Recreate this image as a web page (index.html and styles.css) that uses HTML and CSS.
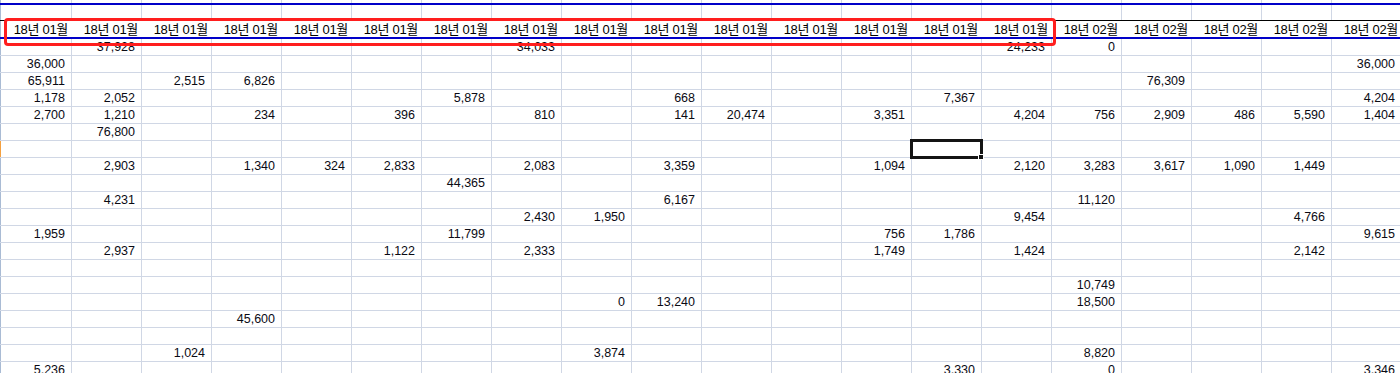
FILE: index.html
```html
<!DOCTYPE html>
<html lang="ko">
<head>
<meta charset="utf-8">
<title>Sheet</title>
<link rel="stylesheet" href="styles.css">
</head>
<body>
<div class="sheet">
  <div class="row top"><i class="g"></i><span class="c"></span><span class="c"></span><span class="c"></span><span class="c"></span><span class="c"></span><span class="c"></span><span class="c"></span><span class="c"></span><span class="c"></span><span class="c"></span><span class="c"></span><span class="c"></span><span class="c"></span><span class="c"></span><span class="c"></span><span class="c"></span><span class="c"></span><span class="c"></span><span class="c"></span><span class="c"></span></div>
  <div class="row blank"><i class="g"></i><span class="c"></span><span class="c"></span><span class="c"></span><span class="c"></span><span class="c"></span><span class="c"></span><span class="c"></span><span class="c"></span><span class="c"></span><span class="c"></span><span class="c"></span><span class="c"></span><span class="c"></span><span class="c"></span><span class="c"></span><span class="c"></span><span class="c"></span><span class="c"></span><span class="c"></span><span class="c"></span></div>
  <div class="row head"><i class="g"></i><span class="c">18년 01월</span><span class="c">18년 01월</span><span class="c">18년 01월</span><span class="c">18년 01월</span><span class="c">18년 01월</span><span class="c">18년 01월</span><span class="c">18년 01월</span><span class="c">18년 01월</span><span class="c">18년 01월</span><span class="c">18년 01월</span><span class="c">18년 01월</span><span class="c">18년 01월</span><span class="c">18년 01월</span><span class="c">18년 01월</span><span class="c">18년 01월</span><span class="c">18년 02월</span><span class="c">18년 02월</span><span class="c">18년 02월</span><span class="c">18년 02월</span><span class="c">18년 02월</span></div>
  <div class="row"><i class="g"></i><span class="c"></span><span class="c">37,928</span><span class="c"></span><span class="c"></span><span class="c"></span><span class="c"></span><span class="c"></span><span class="c">34,033</span><span class="c"></span><span class="c"></span><span class="c"></span><span class="c"></span><span class="c"></span><span class="c"></span><span class="c">24,233</span><span class="c">0</span><span class="c"></span><span class="c"></span><span class="c"></span><span class="c"></span></div>
  <div class="row"><i class="g"></i><span class="c">36,000</span><span class="c"></span><span class="c"></span><span class="c"></span><span class="c"></span><span class="c"></span><span class="c"></span><span class="c"></span><span class="c"></span><span class="c"></span><span class="c"></span><span class="c"></span><span class="c"></span><span class="c"></span><span class="c"></span><span class="c"></span><span class="c"></span><span class="c"></span><span class="c"></span><span class="c">36,000</span></div>
  <div class="row"><i class="g"></i><span class="c">65,911</span><span class="c"></span><span class="c">2,515</span><span class="c">6,826</span><span class="c"></span><span class="c"></span><span class="c"></span><span class="c"></span><span class="c"></span><span class="c"></span><span class="c"></span><span class="c"></span><span class="c"></span><span class="c"></span><span class="c"></span><span class="c"></span><span class="c">76,309</span><span class="c"></span><span class="c"></span><span class="c"></span></div>
  <div class="row"><i class="g"></i><span class="c">1,178</span><span class="c">2,052</span><span class="c"></span><span class="c"></span><span class="c"></span><span class="c"></span><span class="c">5,878</span><span class="c"></span><span class="c"></span><span class="c">668</span><span class="c"></span><span class="c"></span><span class="c"></span><span class="c">7,367</span><span class="c"></span><span class="c"></span><span class="c"></span><span class="c"></span><span class="c"></span><span class="c">4,204</span></div>
  <div class="row"><i class="g"></i><span class="c">2,700</span><span class="c">1,210</span><span class="c"></span><span class="c">234</span><span class="c"></span><span class="c">396</span><span class="c"></span><span class="c">810</span><span class="c"></span><span class="c">141</span><span class="c">20,474</span><span class="c"></span><span class="c">3,351</span><span class="c"></span><span class="c">4,204</span><span class="c">756</span><span class="c">2,909</span><span class="c">486</span><span class="c">5,590</span><span class="c">1,404</span></div>
  <div class="row"><i class="g"></i><span class="c"></span><span class="c">76,800</span><span class="c"></span><span class="c"></span><span class="c"></span><span class="c"></span><span class="c"></span><span class="c"></span><span class="c"></span><span class="c"></span><span class="c"></span><span class="c"></span><span class="c"></span><span class="c"></span><span class="c"></span><span class="c"></span><span class="c"></span><span class="c"></span><span class="c"></span><span class="c"></span></div>
  <div class="row cur"><i class="g"></i><span class="c"></span><span class="c"></span><span class="c"></span><span class="c"></span><span class="c"></span><span class="c"></span><span class="c"></span><span class="c"></span><span class="c"></span><span class="c"></span><span class="c"></span><span class="c"></span><span class="c"></span><span class="c active"><span class="sel"><span class="handle"></span></span></span><span class="c"></span><span class="c"></span><span class="c"></span><span class="c"></span><span class="c"></span><span class="c"></span></div>
  <div class="row"><i class="g"></i><span class="c"></span><span class="c">2,903</span><span class="c"></span><span class="c">1,340</span><span class="c">324</span><span class="c">2,833</span><span class="c"></span><span class="c">2,083</span><span class="c"></span><span class="c">3,359</span><span class="c"></span><span class="c"></span><span class="c">1,094</span><span class="c"></span><span class="c">2,120</span><span class="c">3,283</span><span class="c">3,617</span><span class="c">1,090</span><span class="c">1,449</span><span class="c"></span></div>
  <div class="row"><i class="g"></i><span class="c"></span><span class="c"></span><span class="c"></span><span class="c"></span><span class="c"></span><span class="c"></span><span class="c">44,365</span><span class="c"></span><span class="c"></span><span class="c"></span><span class="c"></span><span class="c"></span><span class="c"></span><span class="c"></span><span class="c"></span><span class="c"></span><span class="c"></span><span class="c"></span><span class="c"></span><span class="c"></span></div>
  <div class="row"><i class="g"></i><span class="c"></span><span class="c">4,231</span><span class="c"></span><span class="c"></span><span class="c"></span><span class="c"></span><span class="c"></span><span class="c"></span><span class="c"></span><span class="c">6,167</span><span class="c"></span><span class="c"></span><span class="c"></span><span class="c"></span><span class="c"></span><span class="c">11,120</span><span class="c"></span><span class="c"></span><span class="c"></span><span class="c"></span></div>
  <div class="row"><i class="g"></i><span class="c"></span><span class="c"></span><span class="c"></span><span class="c"></span><span class="c"></span><span class="c"></span><span class="c"></span><span class="c">2,430</span><span class="c">1,950</span><span class="c"></span><span class="c"></span><span class="c"></span><span class="c"></span><span class="c"></span><span class="c">9,454</span><span class="c"></span><span class="c"></span><span class="c"></span><span class="c">4,766</span><span class="c"></span></div>
  <div class="row"><i class="g"></i><span class="c">1,959</span><span class="c"></span><span class="c"></span><span class="c"></span><span class="c"></span><span class="c"></span><span class="c">11,799</span><span class="c"></span><span class="c"></span><span class="c"></span><span class="c"></span><span class="c"></span><span class="c">756</span><span class="c">1,786</span><span class="c"></span><span class="c"></span><span class="c"></span><span class="c"></span><span class="c"></span><span class="c">9,615</span></div>
  <div class="row"><i class="g"></i><span class="c"></span><span class="c">2,937</span><span class="c"></span><span class="c"></span><span class="c"></span><span class="c">1,122</span><span class="c"></span><span class="c">2,333</span><span class="c"></span><span class="c"></span><span class="c"></span><span class="c"></span><span class="c">1,749</span><span class="c"></span><span class="c">1,424</span><span class="c"></span><span class="c"></span><span class="c"></span><span class="c">2,142</span><span class="c"></span></div>
  <div class="row"><i class="g"></i><span class="c"></span><span class="c"></span><span class="c"></span><span class="c"></span><span class="c"></span><span class="c"></span><span class="c"></span><span class="c"></span><span class="c"></span><span class="c"></span><span class="c"></span><span class="c"></span><span class="c"></span><span class="c"></span><span class="c"></span><span class="c"></span><span class="c"></span><span class="c"></span><span class="c"></span><span class="c"></span></div>
  <div class="row"><i class="g"></i><span class="c"></span><span class="c"></span><span class="c"></span><span class="c"></span><span class="c"></span><span class="c"></span><span class="c"></span><span class="c"></span><span class="c"></span><span class="c"></span><span class="c"></span><span class="c"></span><span class="c"></span><span class="c"></span><span class="c"></span><span class="c">10,749</span><span class="c"></span><span class="c"></span><span class="c"></span><span class="c"></span></div>
  <div class="row"><i class="g"></i><span class="c"></span><span class="c"></span><span class="c"></span><span class="c"></span><span class="c"></span><span class="c"></span><span class="c"></span><span class="c"></span><span class="c">0</span><span class="c">13,240</span><span class="c"></span><span class="c"></span><span class="c"></span><span class="c"></span><span class="c"></span><span class="c">18,500</span><span class="c"></span><span class="c"></span><span class="c"></span><span class="c"></span></div>
  <div class="row"><i class="g"></i><span class="c"></span><span class="c"></span><span class="c"></span><span class="c">45,600</span><span class="c"></span><span class="c"></span><span class="c"></span><span class="c"></span><span class="c"></span><span class="c"></span><span class="c"></span><span class="c"></span><span class="c"></span><span class="c"></span><span class="c"></span><span class="c"></span><span class="c"></span><span class="c"></span><span class="c"></span><span class="c"></span></div>
  <div class="row"><i class="g"></i><span class="c"></span><span class="c"></span><span class="c"></span><span class="c"></span><span class="c"></span><span class="c"></span><span class="c"></span><span class="c"></span><span class="c"></span><span class="c"></span><span class="c"></span><span class="c"></span><span class="c"></span><span class="c"></span><span class="c"></span><span class="c"></span><span class="c"></span><span class="c"></span><span class="c"></span><span class="c"></span></div>
  <div class="row"><i class="g"></i><span class="c"></span><span class="c"></span><span class="c">1,024</span><span class="c"></span><span class="c"></span><span class="c"></span><span class="c"></span><span class="c"></span><span class="c">3,874</span><span class="c"></span><span class="c"></span><span class="c"></span><span class="c"></span><span class="c"></span><span class="c"></span><span class="c">8,820</span><span class="c"></span><span class="c"></span><span class="c"></span><span class="c"></span></div>
  <div class="row"><i class="g"></i><span class="c">5,236</span><span class="c"></span><span class="c"></span><span class="c"></span><span class="c"></span><span class="c"></span><span class="c"></span><span class="c"></span><span class="c"></span><span class="c"></span><span class="c"></span><span class="c"></span><span class="c"></span><span class="c">3,330</span><span class="c"></span><span class="c">0</span><span class="c"></span><span class="c"></span><span class="c"></span><span class="c">3,346</span></div>
  <div class="mark"></div>
</div>
</body>
</html>
```

FILE: styles.css
```css
html, body {
  margin: 0;
  padding: 0;
  background: #fff;
  overflow: hidden;
}

.sheet {
  position: relative;
  width: 1402px;
  display: flex;
  flex-direction: column;
  font-family: "Liberation Sans", Arial, sans-serif;
  color: #0a0a14;
}

.row {
  display: flex;
  height: 16px;
  border-bottom: 1px solid #d0d7e5;
  flex: none;
}

.row.top {
  height: 3px;
  border-bottom: 2px solid #0000c8;
}

.row.blank {
  height: 15px;
  border-bottom: 1px solid #000;
}

.row.head {
  height: 16px;
  border-bottom: 2px solid #0000c8;
}

.g {
  flex: none;
  width: 2px;
  box-sizing: border-box;
  border-left: 1px solid #a9bbd4;
  background: #fff;
}

.row.cur .g {
  border-left-color: #f4a040;
}

.c {
  flex: none;
  width: 70px;
  box-sizing: border-box;
  border-right: 1px solid #d0d7e5;
  padding-right: 6px;
  text-align: right;
  font-size: 12.5px;
  line-height: 16px;
  white-space: nowrap;
  overflow: hidden;
}

.row.head .c {
  border-right-color: #fff;
  padding-right: 3px;
  font-family: "Liberation Sans", "Noto Sans CJK KR", sans-serif;
  font-size: 13px;
  letter-spacing: -0.3px;
  line-height: 17px;
  color: #000;
}

.c.active {
  position: relative;
  overflow: visible;
}

.sel {
  position: absolute;
  left: -2px;
  top: -2px;
  right: -2px;
  bottom: -2px;
  border: 3px solid #141414;
  z-index: 2;
}

.handle {
  position: absolute;
  right: -4px;
  bottom: -4px;
  width: 6px;
  height: 6px;
  box-sizing: border-box;
  background: #141414;
  border: 1px solid #fff;
}

.mark {
  position: absolute;
  left: 4px;
  top: 18px;
  width: 1052px;
  height: 28px;
  box-sizing: border-box;
  border: 3px solid #ff1e1e;
  border-radius: 4px;
  z-index: 3;
}
```
